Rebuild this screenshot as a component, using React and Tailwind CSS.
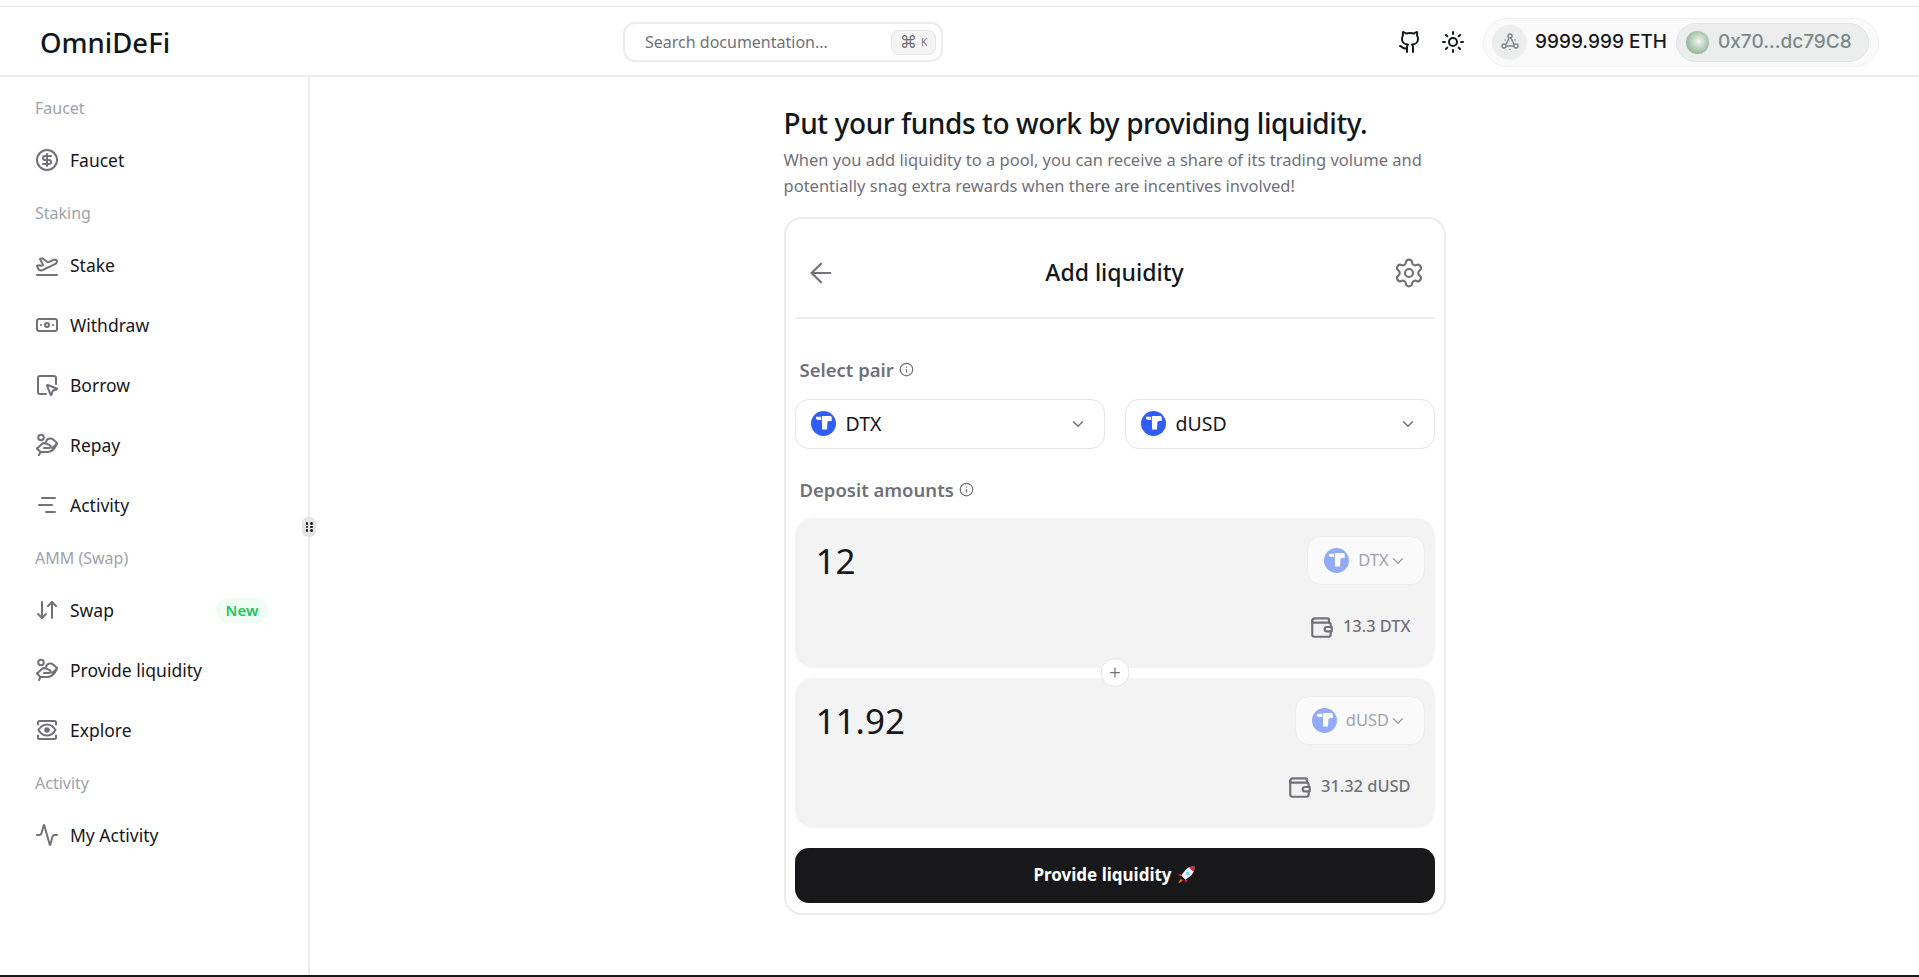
import { ArrowDownUp, ArrowLeft, Activity, Banknote, ChevronDown, CircleDollarSign, Github, Info, PlaneTakeoff, Plus, Settings, SquareMousePointer, Sun } from 'lucide-react';

const SANS = "font-['Noto_Sans','Liberation_Sans',sans-serif]";

function HandIcon() {
  return (
    <svg width="24" height="24" viewBox="0 0 24 24" fill="none" stroke="currentColor" strokeWidth="2" strokeLinecap="round" strokeLinejoin="round">
      <circle cx="6" cy="4.500" r="2.800" />
      <path d="M2 15.500 7 11c1.500-1.200 3-1.200 5-.2l3 1.500c1.500.8.8 2.700-1 2.700H9" />
      <path d="M11 9c.5-2.500 2.500-4 5-3.500 2 .4 4 2.500 6 4.500-1.500 2.500-3 3.500-5 5" />
      <path d="M22 10.500c-1.500 3.500-4 8-9 8.500H5.500" />
      <path d="M2 15.500 5.500 19 4 22" />
    </svg>
  );
}

function EyeFrameIcon() {
  return (
    <svg width="24" height="24" viewBox="0 0 24 24" fill="none" stroke="currentColor" strokeWidth="2" strokeLinecap="round" strokeLinejoin="round">
      <path d="M3 6.500V4.500A1.500 1.500 0 0 1 4.500 3h15A1.500 1.500 0 0 1 21 4.500v2" />
      <path d="M3 17.500v2A1.500 1.500 0 0 0 4.500 21h15a1.500 1.500 0 0 0 1.500-1.500v-2" />
      <path d="M3.500 12c2-3.500 5-5.500 8.500-5.500s6.500 2 8.500 5.500c-2 3.500-5 5.500-8.500 5.500s-6.500-2-8.500-5.500z" />
      <circle cx="12" cy="12" r="1.800" fill="currentColor" />
    </svg>
  );
}

function LinesIcon() {
  return (
    <svg width="24" height="24" viewBox="0 0 24 24" fill="none" stroke="currentColor" strokeWidth="2" strokeLinecap="round">
      <path d="M7 5h13" />
      <path d="M4 12h13" />
      <path d="M11 19h9" />
    </svg>
  );
}

function WalletIcon() {
  return (
    <svg width="26" height="26" viewBox="0 0 24 24" fill="none" stroke="currentColor" strokeWidth="2" strokeLinecap="round" strokeLinejoin="round">
      <path d="M3 6.500A2.500 2.500 0 0 1 5.500 4H17a1.500 1.500 0 0 1 1.500 1.500V8" />
      <path d="M3 6.500V19a2 2 0 0 0 2 2h13a2 2 0 0 0 2-2v-3" />
      <path d="M3 8h15a2 2 0 0 1 2 2v2" />
      <path d="M16.500 12H21v4h-4.500a2 2 0 0 1 0-4z" />
    </svg>
  );
}

function TokenLogo({ faded }) {
  return (
    <svg width="25" height="25" viewBox="0 0 25 25" className={faded ? 'opacity-50' : ''}>
      <circle cx="12.500" cy="12.500" r="12.500" fill="#2f5ef5" />
      <path d="M5 5.800h4.700l.6 3.200H7.200A2.500 2.500 0 0 1 5 5.800z" fill="#fff" />
      <path d="M10.800 5h8.400a1.500 1.500 0 0 1 1.500 1.500V10h-2.800a1.500 1.500 0 0 0-1.500 1.500L16 18.500h-4.900z" fill="#fff" />
    </svg>
  );
}

function NetworkIcon() {
  return (
    <svg width="20" height="20" viewBox="0 0 20 20" fill="none" stroke="#7b8a8a" strokeWidth="1.500">
      <circle cx="10" cy="4" r="2" />
      <circle cx="4" cy="14" r="2" />
      <circle cx="16" cy="14" r="2" />
      <path d="M9 6 6 12.500M11 6l3 6.500M6 14h8" />
      <circle cx="10" cy="17.500" r=".8" fill="#7b8a8a" stroke="none" />
      <circle cx="5" cy="8" r=".8" fill="#7b8a8a" stroke="none" />
      <circle cx="15" cy="8" r=".8" fill="#7b8a8a" stroke="none" />
    </svg>
  );
}

function Label({ children }) {
  return <p className="h-[25px] flex items-center text-[16px] text-[#a1a1aa]">{children}</p>;
}

function NavItem({ icon, label, badge }) {
  return (
    <div className="h-10 flex items-center text-[#18181b] text-[17.500px]">
      <span className="w-6 h-6 mr-[11px] text-[#71717a] flex items-center justify-center">{icon}</span>
      <span>{label}</span>
      {badge && (
        <span className="ml-auto mr-[3px] h-[25px] w-[52px] rounded-full bg-[#f0fdf4] text-[#22c55e] text-[15px] font-semibold flex items-center justify-center">{badge}</span>
      )}
    </div>
  );
}

function Sidebar() {
  return (
    <aside className="relative w-[310px] shrink-0 border-r-2 border-[#ececec] pt-[18px] pl-[35px] pr-[37px]">
      <nav className="flex flex-col gap-5">
        <Label>Faucet</Label>
        <NavItem icon={<CircleDollarSign size={24} />} label="Faucet" />
        <Label>Staking</Label>
        <NavItem icon={<PlaneTakeoff size={24} />} label="Stake" />
        <NavItem icon={<Banknote size={24} />} label="Withdraw" />
        <NavItem icon={<SquareMousePointer size={24} />} label="Borrow" />
        <NavItem icon={<HandIcon />} label="Repay" />
        <NavItem icon={<LinesIcon />} label="Activity" />
        <Label>AMM (Swap)</Label>
        <NavItem icon={<ArrowDownUp size={24} />} label="Swap" badge="New" />
        <NavItem icon={<HandIcon />} label="Provide liquidity" />
        <NavItem icon={<EyeFrameIcon />} label="Explore" />
        <Label>Activity</Label>
        <NavItem icon={<Activity size={24} />} label="My Activity" />
      </nav>
      <span className="absolute top-[440px] -right-[8px] w-[14px] h-5 rounded-md bg-[#e4e4e7] grid grid-cols-2 gap-px place-content-center justify-items-center px-[3px]">
        {[0, 1, 2, 3, 4, 5].map((i) => <i key={i} className="w-[2.500px] h-[2.500px] rounded-full bg-[#18181b]" />)}
      </span>
    </aside>
  );
}

function Header() {
  return (
    <header className="h-[70px] shrink-0 border-b-2 border-[#ececec] flex items-center relative pt-[2px] pl-10 pr-10">
      <p className="mt-[2px] text-[27.500px] font-medium text-[#11181c] w-[583px]">OmniDeFi</p>
      <div className="w-[320px] h-10 rounded-xl border-2 border-[#ececec] flex items-center pl-[20px] pr-[5px] text-[16px] text-[#71717a]">
        <span>Search documentation...</span>
        <span className="ml-auto w-[45px] h-[25px] rounded-lg bg-[#f4f4f5] border border-[#e4e4e7] flex items-center justify-center gap-1 text-[#71717a]">
          <span className="text-[17px]">⌘</span><span className="text-[10px]">K</span>
        </span>
      </div>
      <div className="ml-auto flex items-center">
        <Github size={24} className="text-[#11181c] mr-[19px]" />
        <Sun size={24} className="text-[#11181c] mr-[18px]" />
        <div className="w-[396px] h-[49px] rounded-full bg-[#fafafa] border border-[#f0f0f0] flex items-center pl-2 pr-[9px] font-['Inter',sans-serif]">
          <span className="w-[35px] h-[35px] rounded-full bg-[#eceeee] flex items-center justify-center"><NetworkIcon /></span>
          <span className="ml-2 text-[19px] font-medium text-[#18181b] whitespace-nowrap">9999.999 ETH</span>
          <span className="ml-auto w-[193px] h-[39px] rounded-full bg-[#eceeee] border border-[#e4e6e6] flex items-center pl-2">
            <span className="w-[25px] h-[25px] rounded-full border border-[#e2e4f0] bg-[radial-gradient(circle_at_55%_45%,#f4f7f4,#a8c4ad_55%,#6f9a78)]" />
            <span className="ml-2 text-[19px] font-medium text-[#7b8a8a] whitespace-nowrap">0x70...dc79C8</span>
          </span>
        </div>
      </div>
    </header>
  );
}

function PairSelect({ token }) {
  return (
    <div className="flex-1 h-[50px] rounded-[14px] border border-[#e4e4e7] flex items-center pl-[15px] pr-[17px]">
      <TokenLogo />
      <span className="ml-[10px] text-[19.500px] text-[#18181b]">{token}</span>
      <ChevronDown size={18} className="ml-auto text-[#71717a]" />
    </div>
  );
}

function AmountBox({ amount, token, balance, pillWidth }) {
  return (
    <div className="h-[150px] rounded-[18px] bg-[#f3f3f4] pt-[18px] pl-[21px] pr-[10px]">
      <div className="flex items-center justify-between">
        <span className="text-[35px] leading-[50px] text-[#18181b]">{amount}</span>
        <span className={`${pillWidth} h-[49px] rounded-[14px] bg-[#fafafa] border border-[#eeeeef] flex items-center justify-center`}>
          <TokenLogo faded />
          <span className="ml-[9px] text-[16.500px] text-[#a1a1aa]">{token}</span>
          <ChevronDown size={18} className="text-[#a1a1aa]" />
        </span>
      </div>
      <div className="mt-[28px] pr-[14px] flex items-center justify-end text-[#71717a] font-medium text-[16.400px]">
        <WalletIcon />
        <span className="ml-[8px]">{balance}</span>
      </div>
    </div>
  );
}

function SectionTitle({ children }) {
  return (
    <p className="pl-[5px] flex items-center gap-[5px] text-[18.500px] font-semibold text-[#71717a]">
      {children}
      <Info size={15} />
    </p>
  );
}

function Card() {
  return (
    <div className="mt-[18px] border-2 border-[#ececec] rounded-[18px] px-[9px] pb-[10px]">
      <div className="h-[100px] pt-[9px] border-b-2 border-[#ececec] flex items-center justify-between">
        <ArrowLeft size={32} strokeWidth={1.600} className="ml-[10px] text-[#71717a]" />
        <span className="text-[23px] font-medium text-[#11181c]">Add liquidity</span>
        <Settings size={32} strokeWidth={1.600} className="mr-[10px] text-[#71717a]" />
      </div>
      <div className="mt-[37px]"><SectionTitle>Select pair</SectionTitle></div>
      <div className="mt-[15px] flex gap-5">
        <PairSelect token="DTX" />
        <PairSelect token="dUSD" />
      </div>
      <div className="mt-[27px]"><SectionTitle>Deposit amounts</SectionTitle></div>
      <div className="relative mt-[14px] flex flex-col gap-[10px]">
        <AmountBox amount="12" token="DTX" balance="13.3 DTX" pillWidth="w-[118px]" />
        <AmountBox amount="11.92" token="dUSD" balance="31.32 dUSD" pillWidth="w-[130px]" />
        <span className="absolute left-1/2 top-[140px] -translate-x-1/2 w-[29px] h-[29px] rounded-full bg-white border border-[#e4e4e7] flex items-center justify-center text-[#71717a]">
          <Plus size={15} />
        </span>
      </div>
      <button className="mt-[20px] w-full h-[55px] rounded-[14px] bg-[#18181b] text-white text-[17px] font-bold flex items-center justify-center gap-1">
        Provide liquidity
        <svg width="20" height="20" viewBox="0 0 19 19">
          <path d="M17.500 1.500c-4-.3-7.500 1.500-9.500 4.500l-3 4 4 4 4-3c3-2 4.800-5.500 4.500-9.500z" fill="#f1f5f9" />
          <path d="M17.500 1.500c-1.800-.1-3.500.2-5 1l4 4c.8-1.500 1.100-3.200 1-5z" fill="#e11d48" />
          <circle cx="11" cy="8" r="1.800" fill="#7dd3fc" />
          <path d="M5 8 2 9.500 4.500 11zM11 14l-1.500 3L8 14.500z" fill="#e11d48" />
          <path d="M4.500 13 2 17.500 6.500 15z" fill="#f97316" />
        </svg>
      </button>
    </div>
  );
}

export default function App() {
  return (
    <div className={`h-[977px] flex flex-col bg-white border-t-[6px] border-b-2 border-b-[#18181b] border-t-white overflow-hidden ${SANS}`}>
      <div className="h-[1px] bg-[#e8e8e8] shrink-0" />
      <Header />
      <div className="flex-1 flex min-h-0">
        <Sidebar />
        <main className="flex-1 pt-[28px]">
          <div className="w-[662px] mx-auto">
            <h1 className="text-[28px] leading-[36px] font-medium text-[#11181c] tracking-[-0.4px]">Put your funds to work by providing liquidity.</h1>
            <p className="mt-[6px] text-[16.500px] leading-[26px] text-[#71717a]">When you add liquidity to a pool, you can receive a share of its trading volume and potentially snag extra rewards when there are incentives involved!</p>
            <Card />
          </div>
        </main>
      </div>
    </div>
  );
}
